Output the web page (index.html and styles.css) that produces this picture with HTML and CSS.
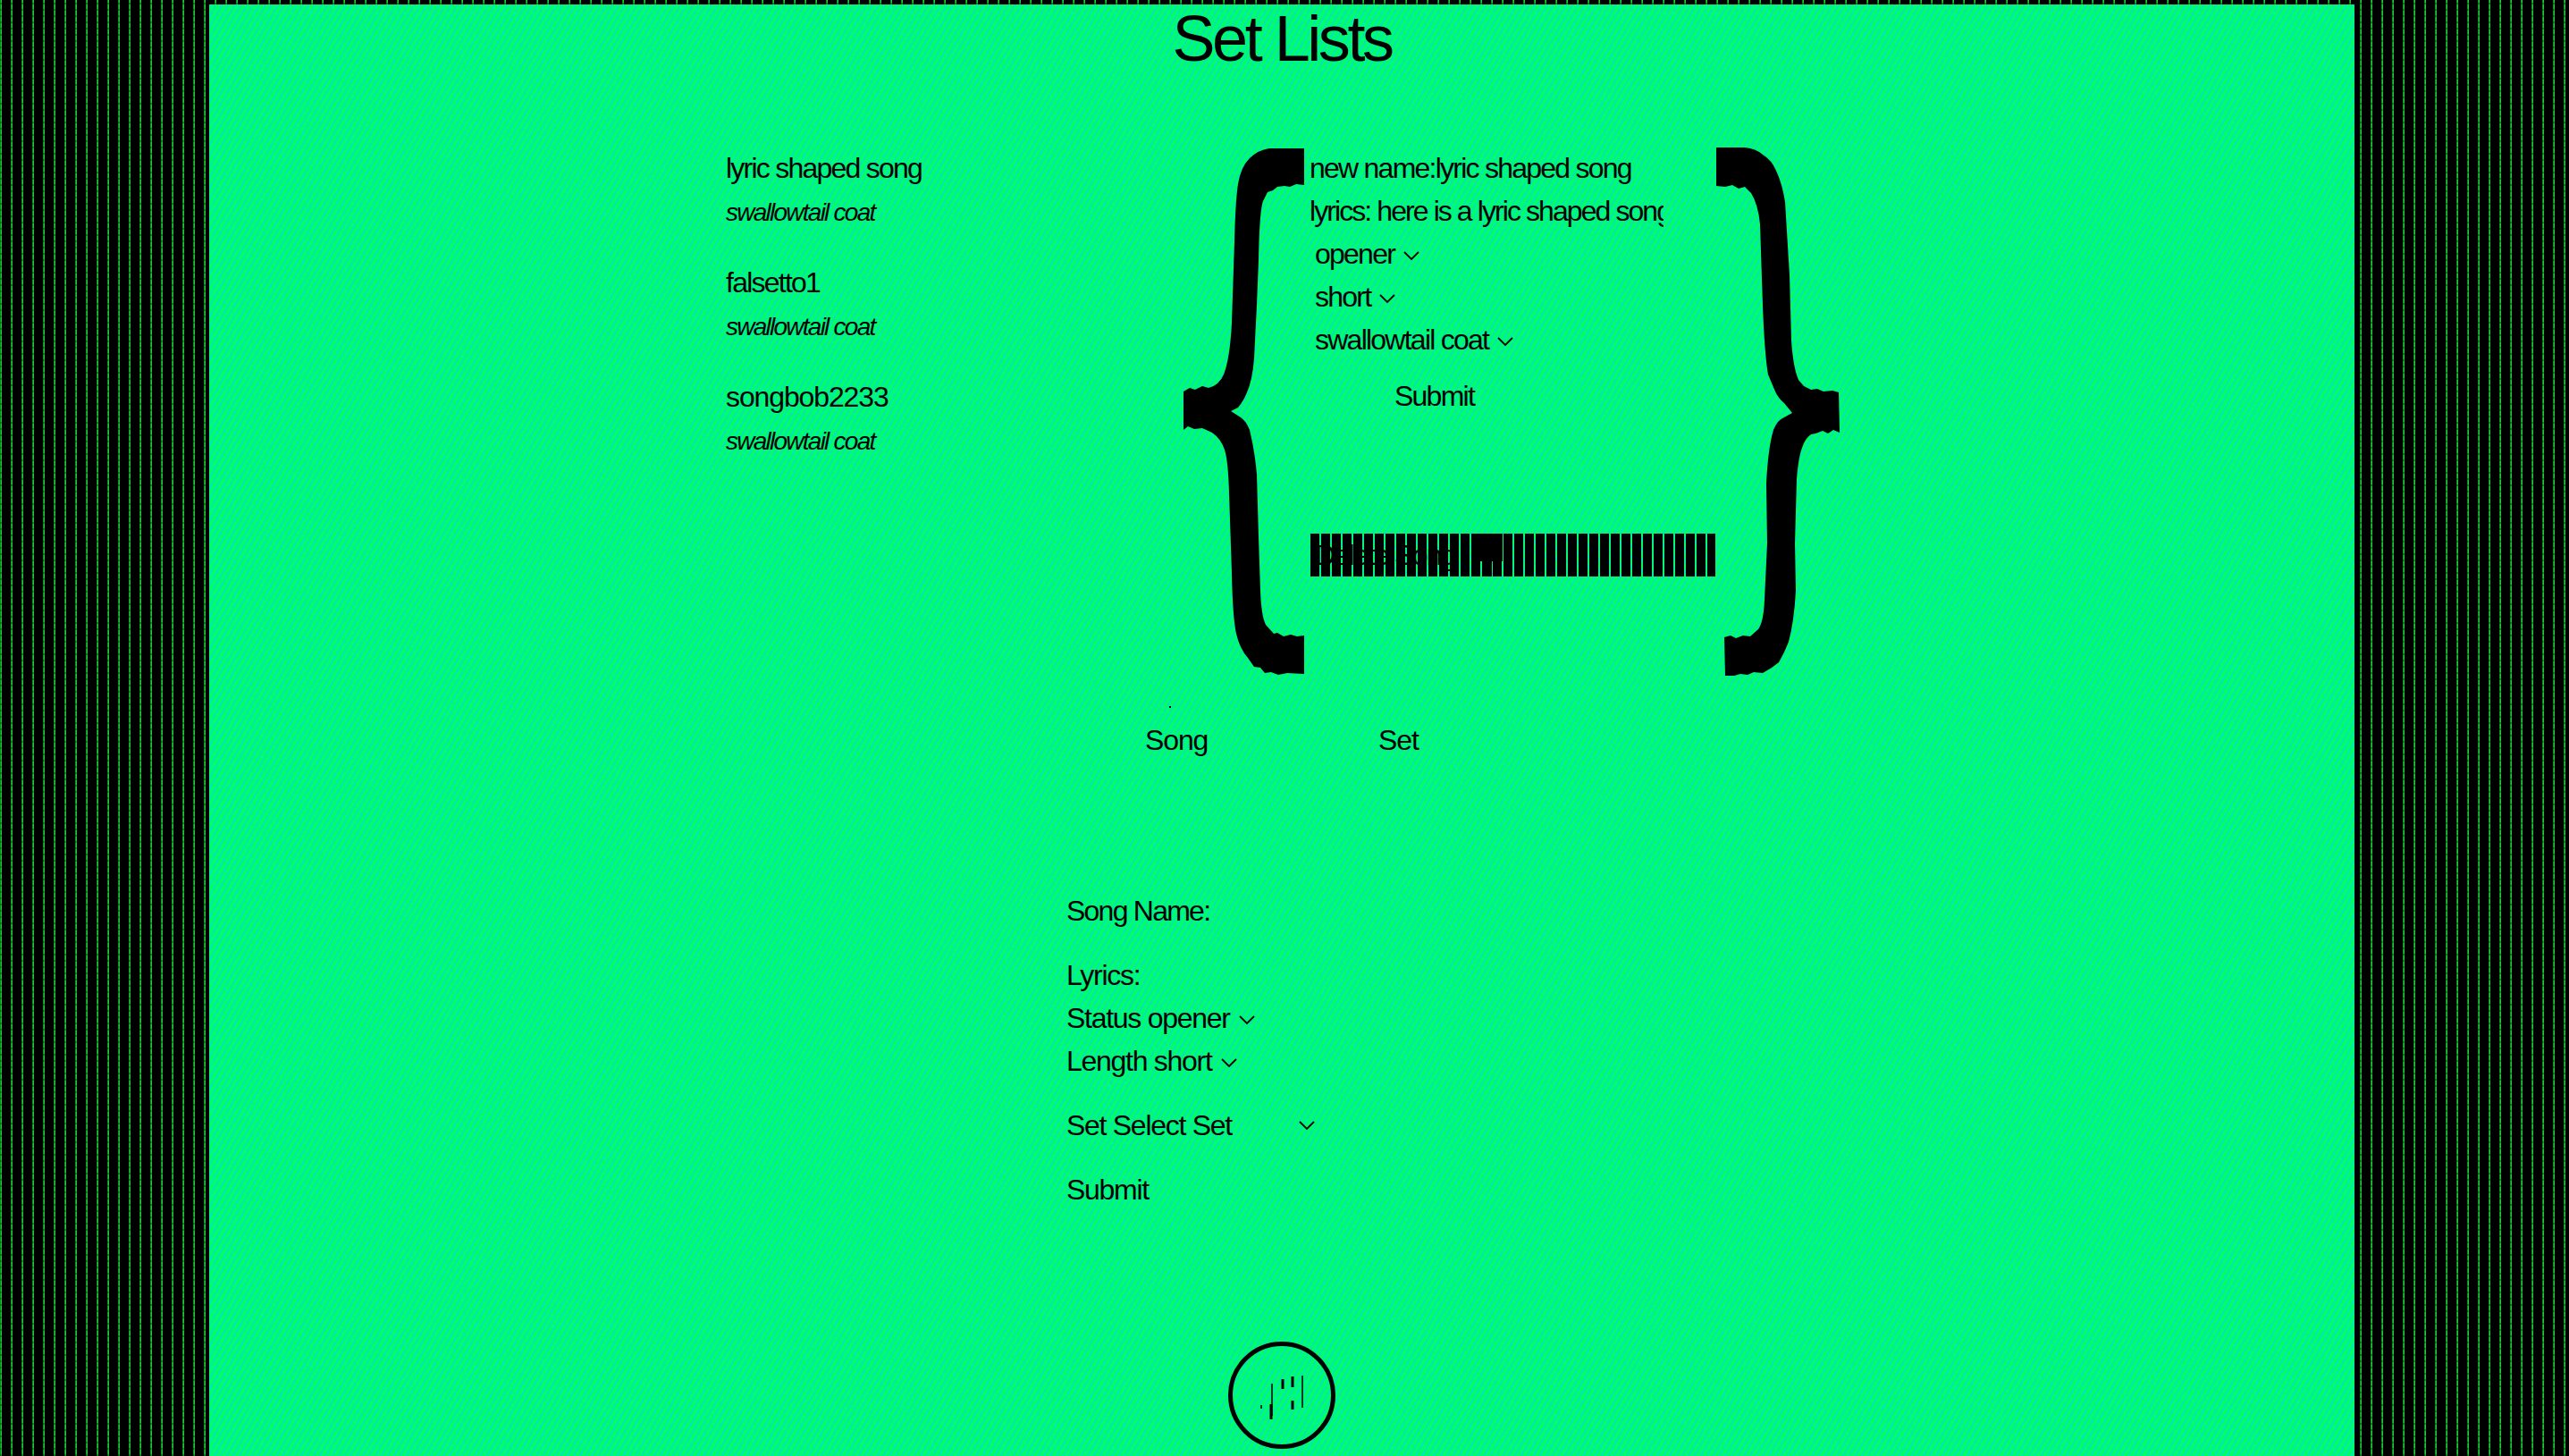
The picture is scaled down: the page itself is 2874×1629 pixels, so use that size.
FILE: index.html
```html
<!DOCTYPE html>
<html lang="en">
<head>
<meta charset="utf-8">
<title>Set Lists</title>
<link rel="stylesheet" href="styles.css">
</head>
<body>
<main class="panel">
  <h1 class="title">Set Lists</h1>

  <section class="workspace">
    <ul class="songs">
      <li class="song"><div>lyric shaped song</div><em>swallowtail coat</em></li>
      <li class="song"><div>falsetto1</div><em>swallowtail coat</em></li>
      <li class="song"><div class="loose">songbob2233</div><em>swallowtail coat</em></li>
    </ul>

    <div class="editor">
      <svg class="brace brace-left" viewBox="1324 164 135 592" aria-hidden="true">
        <path d="M1459 165H1420Q1407 167 1398 176Q1388 186 1385 205Q1382 225 1381 270L1378 360Q1376 400 1369 418Q1364 430 1352 433L1345 431L1337 435L1331 433L1324 437V480L1329 476L1336 479L1345 478L1356 483Q1366 490 1370 502Q1374 515 1375 550L1378 640Q1379 690 1383 708Q1387 725 1396 735L1403 745L1410 746L1415 752L1422 751L1430 754L1440 752L1459 753V710L1451 711L1444 709L1436 711L1429 707L1425 708L1416 698Q1411 688 1410 660L1408 600L1406 530Q1404 505 1398 480Q1394 470 1388 466L1377 459L1385 455Q1391 448 1395 438Q1401 425 1403 400L1406 340L1408 290Q1409 235 1413 224L1418 214L1424 212L1429 208L1437 207L1443 208L1450 205L1459 206Z"/>
      </svg>

      <form class="edit-form">
        <div class="row">new name:lyric shaped song</div>
        <div class="row clip">lyrics: here is a lyric shaped song</div>
        <div class="row pick">opener<svg class="chev" viewBox="0 0 18 11"><path d="M1 1L9 9L17 1"/></svg></div>
        <div class="row pick">short<svg class="chev" viewBox="0 0 18 11"><path d="M1 1L9 9L17 1"/></svg></div>
        <div class="row pick">swallowtail coat<svg class="chev" viewBox="0 0 18 11"><path d="M1 1L9 9L17 1"/></svg></div>
        <div class="row submit">Submit</div>
        <div class="delete">
          <span>Delete Song</span>
          <svg class="trash" viewBox="0 0 26 48" aria-hidden="true"><path d="M0 0H26V31H14V48H12V31H0Z"/></svg>
        </div>
      </form>

      <svg class="brace brace-right" viewBox="1920 164 138 592" aria-hidden="true">
        <path d="M1920 164H1952Q1964 165 1972 172Q1982 178 1987 190Q1994 205 1997 225L2002 307L2004 380Q2006 410 2012 424L2018 431L2026 435L2033 434L2040 437L2050 436L2057 438L2058 483L2051 480L2045 484L2039 481L2031 484L2026 485Q2019 490 2016 500Q2012 510 2010 535L2008 607L2009 660Q2007 695 2001 717Q1996 730 1990 740L1982 746L1972 752L1962 751L1955 754L1947 753L1940 755L1930 755L1929 712L1936 710L1942 713L1950 710L1958 711L1967 703Q1973 695 1974 670L1977 607L1976 540Q1978 500 1984 480Q1988 470 1994 467L2005 461L1996 450Q1989 444 1986 437L1978 418Q1974 395 1972 340L1969 250Q1967 228 1959 215L1952 208L1945 210L1938 206L1930 208L1920 207Z"/>
      </svg>
    </div>
  </section>

  <div class="dot"></div>
  <nav class="tabs"><span>Song</span><span>Set</span></nav>

  <form class="new-song">
    <div class="line gap tight">Song Name:</div>
    <div class="line">Lyrics:</div>
    <div class="line">Status opener<svg class="chev" viewBox="0 0 18 11"><path d="M1 1L9 9L17 1"/></svg></div>
    <div class="line gap">Length short<svg class="chev" viewBox="0 0 18 11"><path d="M1 1L9 9L17 1"/></svg></div>
    <div class="line gap set-line"><span>Set Select Set</span><svg class="chev" viewBox="0 0 18 11"><path d="M1 1L9 9L17 1"/></svg></div>
    <div class="line">Submit</div>
  </form>

  <footer class="foot">
    <svg class="logo" viewBox="0 0 120 120" aria-hidden="true">
      <circle cx="60" cy="60" r="57.5"/>
      <path class="thin" d="M49 47V83"/>
      <path d="M48 70V87"/>
      <path d="M61 42V53"/>
      <path d="M72 39V51M72 66V76"/>
      <path class="thin" d="M83 38V74"/>
      <path class="thin" d="M37 71V75"/>
    </svg>
  </footer>
</main>
</body>
</html>
```
FILE: styles.css
```css
html, body {
  margin: 0;
  height: 100%;
  overflow: hidden;
}
body {
  background-color: #000;
  background-image:
    repeating-linear-gradient(180deg, rgba(0,0,0,0) 0 3px, rgba(0,0,0,.3) 3px 5px, rgba(0,0,0,0) 5px 7px),
    repeating-linear-gradient(90deg, #0f8a2e 0 1px, #17d624 1px 2px, #000 2px 12px);
  font-family: "Liberation Sans", Arial, sans-serif;
  color: #000;
  font-size: 32px;
  line-height: 48px;
  letter-spacing: -0.035em;
}
.panel {
  width: 2400px;
  height: 1624px;
  margin: 5px 0 0 234px;
  background-color: #00ff60;
  background-image:
    repeating-linear-gradient(120deg, rgba(0,228,190,.9) 0 2px, rgba(0,255,110,0) 2px 6px),
    repeating-linear-gradient(30deg, rgba(0,240,160,.35) 0 2px, rgba(0,255,110,0) 2px 5px);
}
.title {
  margin: 0;
  height: 76px;
  font-size: 72px;
  line-height: 76px;
  font-weight: 400;
  letter-spacing: -0.048em;
  text-align: center;
}
.workspace {
  display: flex;
  margin: 84px 0 0 578px;
  height: 592px;
  letter-spacing: -0.055em;
}
.songs {
  list-style: none;
  margin: -1px 0 0;
  padding: 0;
  width: 512px;
  display: flex;
  flex-direction: column;
  gap: 32px;
}
.loose { letter-spacing: -0.035em; }
.song em {
  display: block;
  height: 48px;
  font-size: 28px;
  line-height: 52px;
  letter-spacing: -0.0625em;
  font-weight: 400;
}
.editor {
  display: flex;
  height: 592px;
}
.brace {
  display: block;
  height: 592px;
  fill: #000;
}
.brace-left { width: 135px; }
.brace-right { width: 138px; }
.edit-form {
  width: 461px;
  margin-top: -1px;
  padding-left: 6px;
  box-sizing: border-box;
}
.row { height: 48px; white-space: nowrap; }
.clip { width: 396px; overflow: hidden; letter-spacing: -0.06em; }
.pick { padding-left: 6px; }
.submit { margin: 15px 0 0 95px; }
.chev {
  width: 18px;
  height: 11px;
  margin-left: 10px;
  vertical-align: 3px;
  fill: none;
  stroke: #000;
  stroke-width: 1.8;
}
.delete {
  display: flex;
  align-items: flex-start;
  width: 454px;
  height: 48px;
  margin-top: 130px;
  background-image: repeating-linear-gradient(90deg, rgba(0,0,0,0) 0 2px, #000 2px 12px);
  background-attachment: fixed;
  overflow: hidden;
  color: #000;
}
.delete span {
  width: 184px;
  margin: 3px 0 0 6px;
  line-height: 42px;
  white-space: nowrap;
}
.trash {
  width: 26px;
  height: 48px;
  fill: #000;
}
.dot {
  width: 2px;
  height: 2px;
  margin: 33px 0 0 1074px;
  background: #000;
}
.tabs {
  display: flex;
  margin: 12px 0 0 1047px;
}
.tabs span:first-child { width: 261px; }
.new-song {
  margin: 143px 0 0 959px;
  letter-spacing: -0.04em;
}
.tight { letter-spacing: -0.055em; }
.line { height: 48px; white-space: nowrap; }
.gap { margin-bottom: 24px; }
.set-line {
  display: flex;
  align-items: center;
  width: 278px;
  justify-content: space-between;
}
.foot {
  display: flex;
  justify-content: center;
  margin-top: 146px;
}
.logo {
  width: 120px;
  height: 120px;
  fill: none;
  stroke: #000;
  stroke-width: 3;
}
.logo circle { stroke-width: 5; }
.logo .thin { stroke-width: 1.5; }
```
